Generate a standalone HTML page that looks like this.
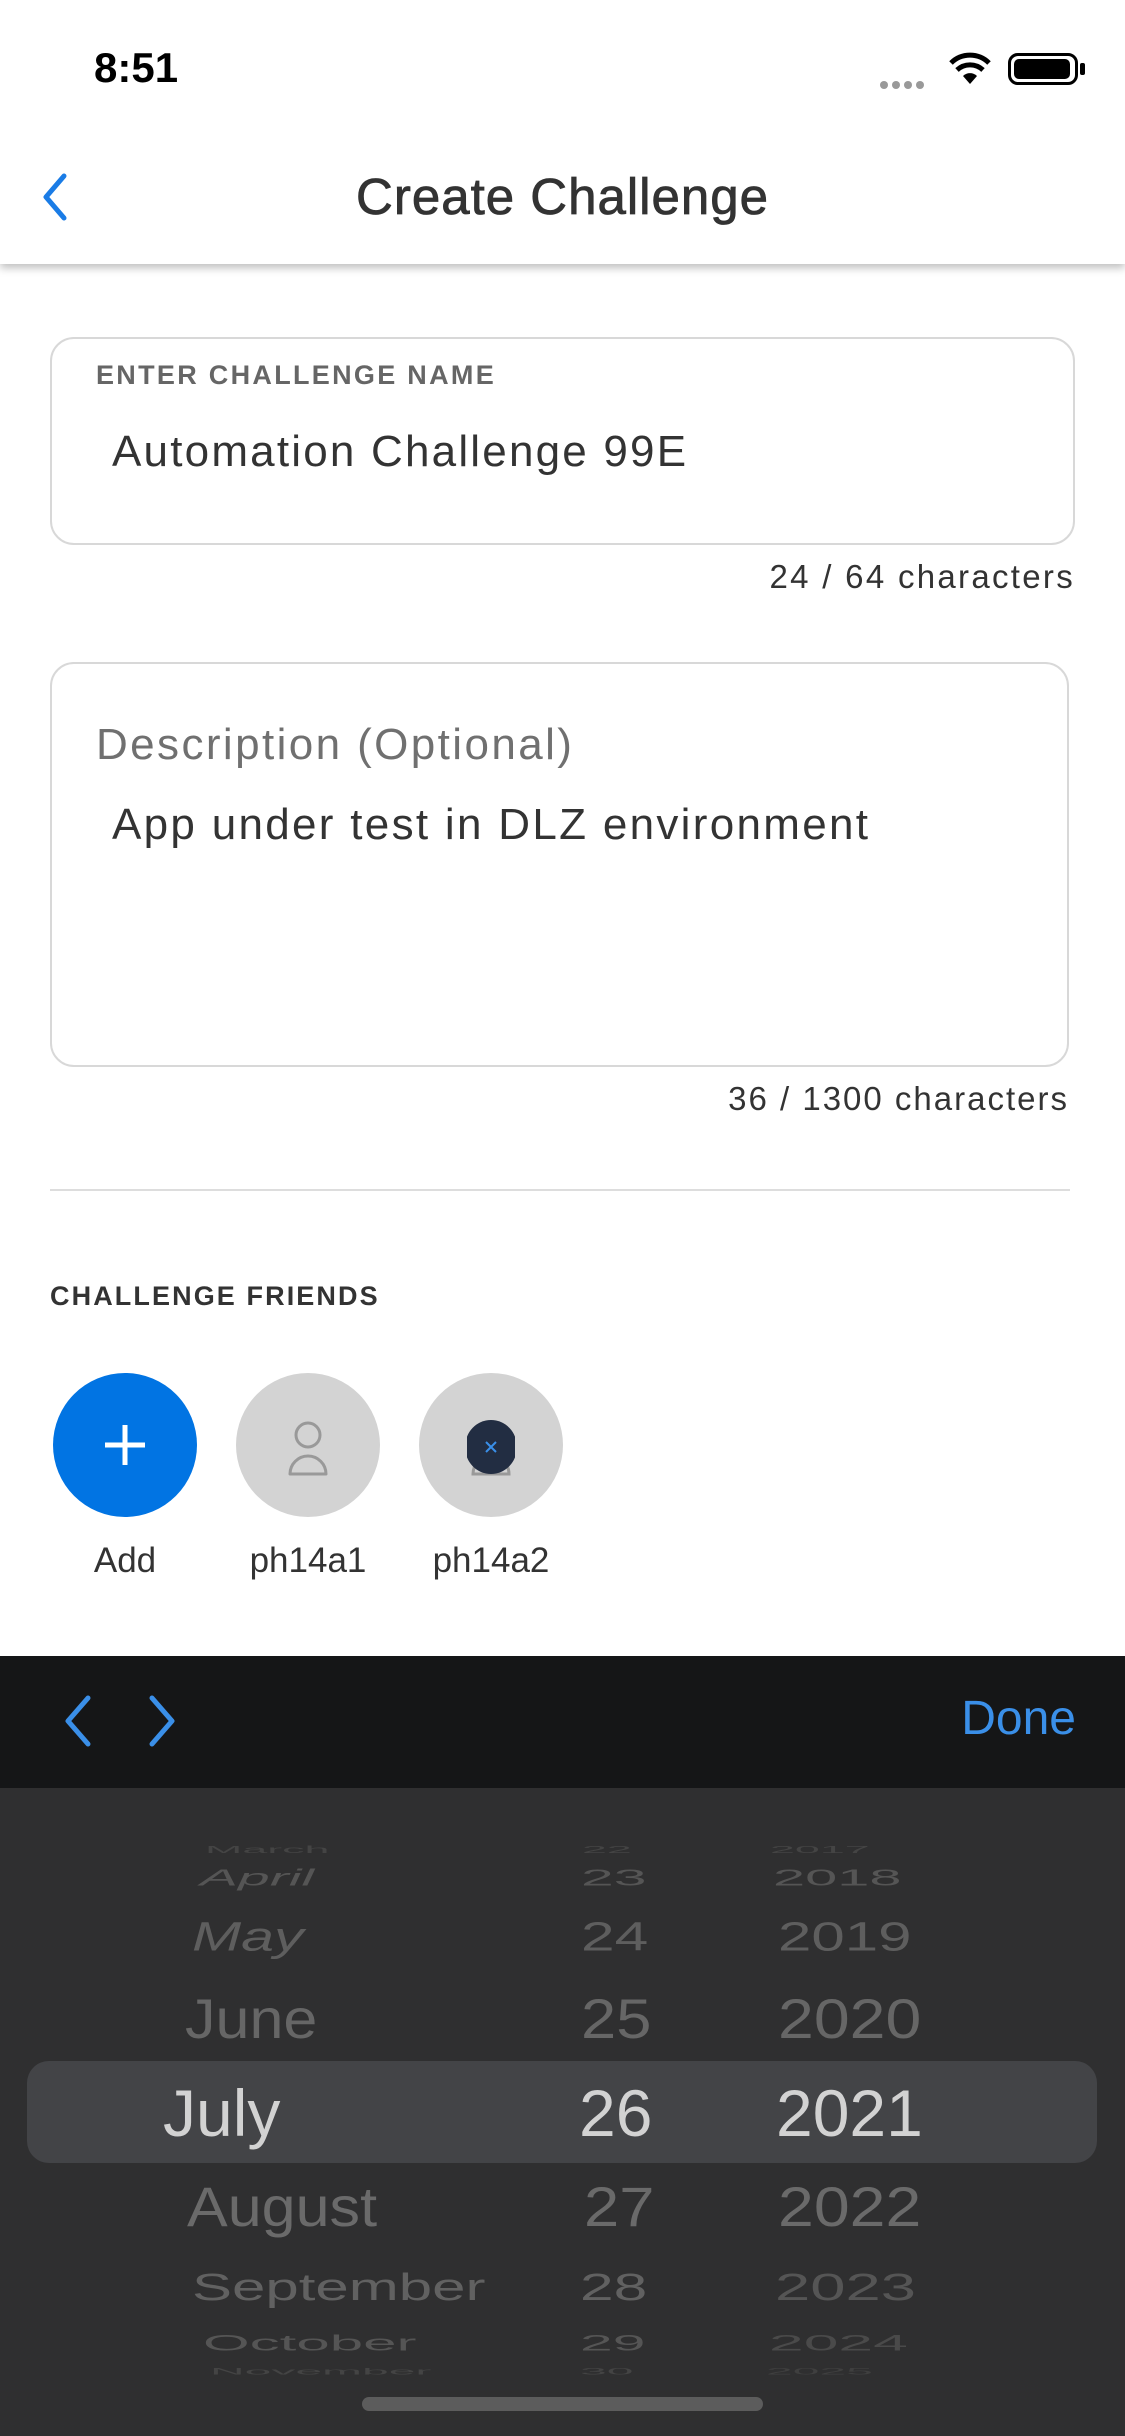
<!DOCTYPE html>
<html><head><meta charset="utf-8"><style>
*{margin:0;padding:0;box-sizing:border-box}
body{width:1125px;height:2436px;overflow:hidden;background:#fff;font-family:"Liberation Sans",sans-serif;position:relative}
.a{position:absolute}
.nav{left:0;top:0;width:1125px;height:264px;background:#fff;box-shadow:0 4px 8px rgba(0,0,0,.25)}
.box{border:2px solid #d8d8d8;border-radius:24px}
.cnt{font-size:33px;color:#333;text-align:right;letter-spacing:2.3px}
.circ{width:144px;height:144px;border-radius:50%;top:1373px}
.lbl{font-size:35px;color:#333;width:200px;text-align:center;top:1541px}
.pk{position:absolute;white-space:nowrap;transform-origin:left center}
</style></head><body>
<div class="a nav"></div>
<div class="a" style="left:94px;top:44px;font-size:42px;font-weight:bold;color:#000">8:51</div>
<div class="a" style="left:880px;top:76px;width:50px;height:8px;">
<span style="display:inline-block;width:8px;height:8px;border-radius:50%;background:#999;margin-right:4px"></span><span style="display:inline-block;width:8px;height:8px;border-radius:50%;background:#999;margin-right:4px"></span><span style="display:inline-block;width:8px;height:8px;border-radius:50%;background:#999;margin-right:4px"></span><span style="display:inline-block;width:8px;height:8px;border-radius:50%;background:#999"></span></div>
<svg class="a" style="left:948px;top:52px" width="44" height="34" viewBox="0 0 44 34"><path d="M22 32 L15 24 A10 10 0 0 1 29 24 Z" fill="#000"/><path d="M9 18 A19 19 0 0 1 35 18" stroke="#000" stroke-width="5" fill="none"/><path d="M3 11 A27 27 0 0 1 41 11" stroke="#000" stroke-width="5" fill="none"/></svg>
<div class="a" style="left:1008px;top:53px;width:70px;height:32px;border:3px solid #000;border-radius:10px;padding:3px"><div style="width:56px;height:20px;background:#000;border-radius:5px"></div></div>
<div class="a" style="left:1080px;top:63px;width:5px;height:12px;background:#000;border-radius:2px"></div>
<svg class="a" style="left:38px;top:172px" width="32" height="50" viewBox="0 0 32 50"><path d="M26 4 L8 25 L26 46" stroke="#1a7ce6" stroke-width="5" fill="none" stroke-linecap="round" stroke-linejoin="round"/></svg>
<div class="a" style="left:0;top:167px;width:1125px;text-align:center;font-size:51px;color:#333;letter-spacing:1px;-webkit-text-stroke:0.8px #333">Create Challenge</div>

<div class="a box" style="left:50px;top:337px;width:1025px;height:208px"></div>
<div class="a" style="left:96px;top:360px;font-size:27px;font-weight:bold;color:#666;letter-spacing:2.3px">ENTER CHALLENGE NAME</div>
<div class="a" style="left:112px;top:427px;font-size:44px;color:#333;letter-spacing:2.2px">Automation Challenge 99E</div>
<div class="a cnt" style="right:50px;top:558px">24 / 64 characters</div>

<div class="a box" style="left:50px;top:662px;width:1019px;height:405px"></div>
<div class="a" style="left:96px;top:720px;font-size:44px;color:#707070;letter-spacing:2.4px">Description (Optional)</div>
<div class="a" style="left:112px;top:800px;font-size:44px;color:#333;letter-spacing:2.3px">App under test in DLZ environment</div>
<div class="a cnt" style="right:56px;top:1080px;letter-spacing:2px">36 / 1300 characters</div>
<div class="a" style="left:50px;top:1189px;width:1020px;height:2px;background:#ddd"></div>
<div class="a" style="left:50px;top:1281px;font-size:27px;font-weight:bold;color:#333;letter-spacing:2.1px">CHALLENGE FRIENDS</div>

<div class="a circ" style="left:53px;background:#0174e3"></div>
<svg class="a" style="left:101px;top:1421px" width="48" height="48"><path d="M24 4V44M4 24H44" stroke="#fff" stroke-width="5"/></svg>
<div class="a circ" style="left:236px;background:#d3d3d3"></div>
<svg class="a" style="left:284px;top:1419px" width="48" height="60" viewBox="0 0 48 60"><circle cx="24" cy="16" r="12" stroke="#999" stroke-width="3" fill="none"/><path d="M6 55 A18 18 0 0 1 42 55 Z" stroke="#999" stroke-width="3" fill="none" stroke-linejoin="round"/></svg>
<div class="a circ" style="left:419px;background:#d3d3d3"></div>
<svg class="a" style="left:467px;top:1419px" width="48" height="60" viewBox="0 0 48 60"><path d="M6 55 A18 18 0 0 1 42 55 Z" stroke="#999" stroke-width="3" fill="none"/><ellipse cx="24" cy="28" rx="26" ry="27" fill="#222d42"/><path d="M19 23L29 33M29 23L19 33" stroke="#3a8fe8" stroke-width="2"/></svg>
<div class="a lbl" style="left:25px">Add</div>
<div class="a lbl" style="left:208px">ph14a1</div>
<div class="a lbl" style="left:391px">ph14a2</div>

<div class="a" style="left:0;top:1656px;width:1125px;height:132px;background:#151617"></div>
<svg class="a" style="left:60px;top:1692px" width="120" height="58" viewBox="0 0 120 58"><path d="M28 6L8 29L28 52" stroke="#3a8fe8" stroke-width="5" fill="none" stroke-linecap="round" stroke-linejoin="round"/><path d="M92 6L112 29L92 52" stroke="#3a8fe8" stroke-width="5" fill="none" stroke-linecap="round" stroke-linejoin="round"/></svg>
<div class="a" style="right:49px;top:1691px;font-size:48px;color:#3a8fe8">Done</div>
<div class="a" style="left:0;top:1788px;width:1125px;height:648px;background:#2f2f30"></div>
<div class="a" style="left:27px;top:2061px;width:1070px;height:102px;border-radius:22px;background:#434447"></div>

<div class="pk" style="left:205px;top:1834px;font-size:28px;color:#444;transform:scale(1.6,.35)">March</div>
<div class="pk" style="left:200px;top:1857px;font-size:38px;color:#555;transform:scale(1.5,.6);font-style:italic">April</div>
<div class="pk" style="left:192px;top:1910px;font-size:48px;color:#5e5e5e;transform:scale(1.23,.85);font-style:italic">May</div>
<div class="pk" style="left:185px;top:1986px;font-size:56px;color:#666;transform:scaleX(1.09)">June</div>
<div class="pk" style="left:163px;top:2075px;font-size:66px;color:#d2d2d2">July</div>
<div class="pk" style="left:187px;top:2174px;font-size:56px;color:#6a6a6a;transform:scaleX(1.09)">August</div>
<div class="pk" style="left:192px;top:2260px;font-size:48px;color:#616161;transform:scale(1.25,.8)">September</div>
<div class="pk" style="left:203px;top:2321px;font-size:40px;color:#555;transform:scale(1.5,.55)">October</div>
<div class="pk" style="left:210px;top:2355px;font-size:30px;color:#444;transform:scale(1.6,.3)">November</div>

<div class="pk" style="left:582px;top:1834px;font-size:28px;color:#444;transform:scale(1.6,.35)">22</div>
<div class="pk" style="left:581px;top:1857px;font-size:38px;color:#555;transform:scale(1.55,.6)">23</div>
<div class="pk" style="left:581px;top:1910px;font-size:48px;color:#5e5e5e;transform:scale(1.26,.85)">24</div>
<div class="pk" style="left:581px;top:1986px;font-size:56px;color:#666;transform:scaleX(1.13)">25</div>
<div class="pk" style="left:579px;top:2075px;font-size:66px;color:#d2d2d2">26</div>
<div class="pk" style="left:584px;top:2174px;font-size:56px;color:#6a6a6a;transform:scaleX(1.13)">27</div>
<div class="pk" style="left:580px;top:2260px;font-size:48px;color:#616161;transform:scale(1.26,.8)">28</div>
<div class="pk" style="left:580px;top:2321px;font-size:40px;color:#555;transform:scale(1.47,.55)">29</div>
<div class="pk" style="left:580px;top:2355px;font-size:30px;color:#444;transform:scale(1.6,.3)">30</div>

<div class="pk" style="left:770px;top:1834px;font-size:28px;color:#444;transform:scale(1.6,.35)">2017</div>
<div class="pk" style="left:773px;top:1857px;font-size:38px;color:#555;transform:scale(1.52,.6)">2018</div>
<div class="pk" style="left:778px;top:1910px;font-size:48px;color:#5e5e5e;transform:scale(1.25,.85)">2019</div>
<div class="pk" style="left:778px;top:1986px;font-size:56px;color:#666;transform:scaleX(1.15)">2020</div>
<div class="pk" style="left:776px;top:2075px;font-size:66px;color:#d2d2d2">2021</div>
<div class="pk" style="left:778px;top:2174px;font-size:56px;color:#6a6a6a;transform:scaleX(1.15)">2022</div>
<div class="pk" style="left:775px;top:2260px;font-size:48px;color:#555;transform:scale(1.32,.8)">2023</div>
<div class="pk" style="left:769px;top:2321px;font-size:40px;color:#4a4a4a;transform:scale(1.56,.55)">2024</div>
<div class="pk" style="left:766px;top:2355px;font-size:30px;color:#3f3f3f;transform:scale(1.6,.3)">2025</div>

<div class="a" style="left:362px;top:2397px;width:401px;height:14px;border-radius:7px;background:#5c5c5c"></div>
</body></html>
